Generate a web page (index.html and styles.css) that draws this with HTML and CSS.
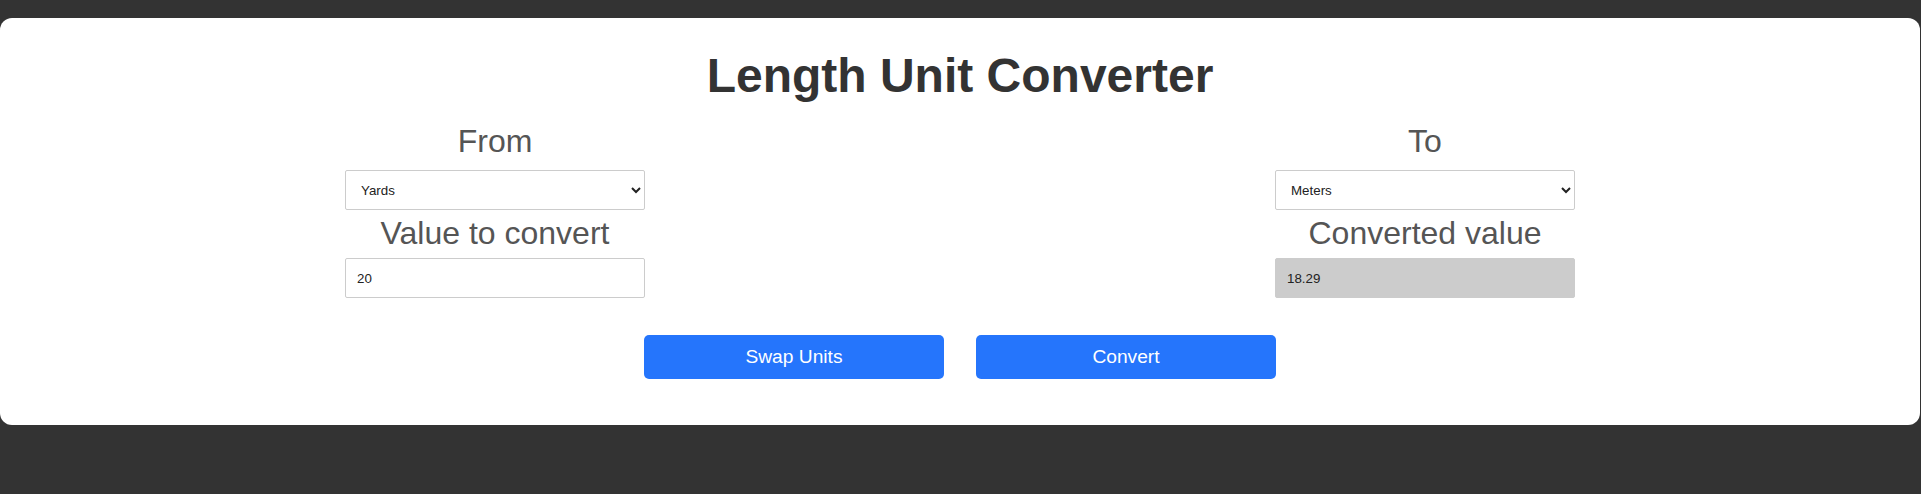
FILE: index.html
```html
<!DOCTYPE html>
<html lang="en">
<head>
<meta charset="utf-8">
<title>Length Unit Converter</title>
<link rel="stylesheet" href="styles.css">
</head>
<body>
<div class="card">
  <h1 class="title">Length Unit Converter</h1>
  <div class="row">
    <div class="col">
      <label class="label" for="from">From</label>
      <select id="from" class="field select">
        <option>Yards</option>
        <option>Meters</option>
        <option>Feet</option>
        <option>Inches</option>
      </select>
      <label class="label label-second" for="value">Value to convert</label>
      <input id="value" class="field input" type="text" value="20">
    </div>
    <div class="col">
      <label class="label" for="to">To</label>
      <select id="to" class="field select">
        <option>Meters</option>
        <option>Yards</option>
        <option>Feet</option>
        <option>Inches</option>
      </select>
      <label class="label label-second" for="result">Converted value</label>
      <input id="result" class="field input readonly" type="text" value="18.29" readonly>
    </div>
  </div>
  <div class="actions">
    <button class="btn" type="button">Swap Units</button>
    <button class="btn" type="button">Convert</button>
  </div>
</div>
</body>
</html>
```

FILE: styles.css
```css
html, body {
  margin: 0;
  padding: 0;
}

body {
  background: #333333;
  font-family: "Liberation Sans", Arial, sans-serif;
  height: 494px;
  overflow: hidden;
}

.card {
  width: 1920px;
  margin-top: 18px;
  background: #ffffff;
  border-radius: 12px;
  padding: 30px 0 46px;
  box-sizing: border-box;
}

.title {
  margin: 0;
  font-size: 48px;
  font-weight: bold;
  color: #333333;
  text-align: center;
  line-height: normal;
}

.row {
  width: 1230px;
  margin: 20px auto 0;
  display: flex;
  justify-content: space-between;
}

.col {
  width: 300px;
  display: flex;
  flex-direction: column;
}

.label {
  display: block;
  font-size: 32px;
  color: #555555;
  text-align: center;
  line-height: normal;
}

.label-second {
  margin-top: 5px;
}

.field {
  box-sizing: border-box;
  width: 300px;
  height: 40px;
  border: 1px solid #cccccc;
  border-radius: 2px;
  font-family: "Liberation Sans", Arial, sans-serif;
  font-size: 13.33px;
  color: #222222;
  background: #ffffff;
  padding: 0 11px;
  margin: 0;
}

.select {
  margin-top: 10px;
}

.input {
  margin-top: 6px;
  outline: none;
}

.readonly {
  background: #cccccc;
  border-color: #cccccc;
}

.actions {
  display: flex;
  justify-content: center;
  gap: 32px;
  margin-top: 37px;
}

.btn {
  width: 300px;
  height: 44px;
  border: none;
  border-radius: 5px;
  background: #2575fc;
  color: #ffffff;
  font-family: "Liberation Sans", Arial, sans-serif;
  font-size: 19.2px;
  cursor: pointer;
  padding: 0;
}
```
